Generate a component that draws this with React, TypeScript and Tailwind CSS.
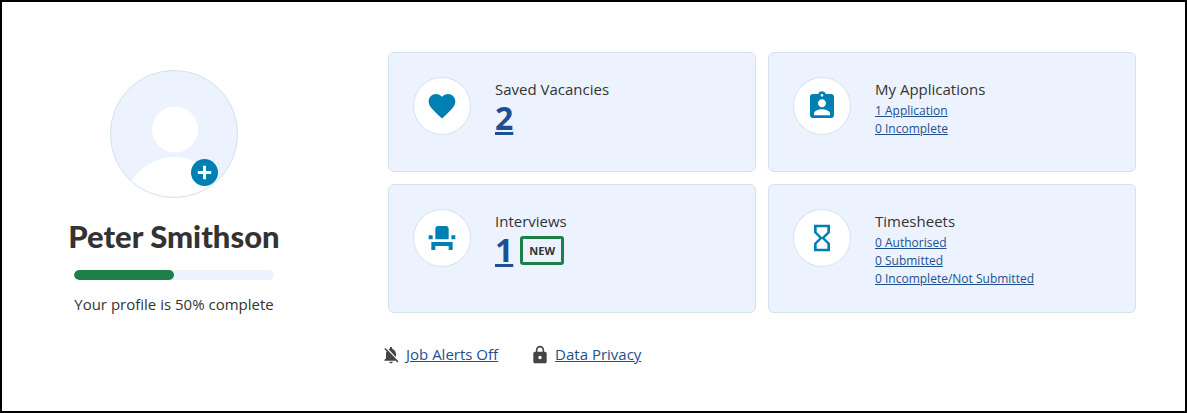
import React from 'react';
import {
  MdAssignmentInd,
  MdEventSeat,
  MdFavorite,
  MdHourglassEmpty,
  MdLock,
  MdNotificationsOff,
} from 'react-icons/md';

const PROFILE_COMPLETE = 50;

const linkClass = 'text-[#1d4f91] underline';

function Avatar() {
  return (
    <div className="relative size-32">
      <svg viewBox="0 0 128 128" className="size-32" aria-hidden="true">
        <defs>
          <clipPath id="avatar-clip">
            <circle cx="64" cy="64" r="63.5" />
          </clipPath>
        </defs>
        <circle cx="64" cy="64" r="64" fill="#ecf3fe" />
        <g clipPath="url(#avatar-clip)" fill="#fff">
          <circle cx="65" cy="59.5" r="23" />
          <circle cx="65" cy="139" r="52" />
        </g>
        <circle cx="64" cy="64" r="63.5" fill="none" stroke="#d3e3ec" />
      </svg>
      <button type="button" aria-label="Upload a photo" className="absolute right-5 bottom-3 size-[27px] rounded-full bg-[#0080b2]">
        <svg viewBox="0 0 27 27" className="size-full" aria-hidden="true">
          <path d="M13.5 6.8v13.4M6.8 13.5h13.4" stroke="#fff" strokeWidth="3" />
        </svg>
      </button>
    </div>
  );
}

interface CardProps {
  title: string;
  icon: React.ReactNode;
  children: React.ReactNode;
}

function Card({ title, icon, children }: CardProps) {
  return (
    <section className="flex min-h-[120px] gap-6 rounded-md border border-[#d3e3ec] bg-[#ecf3fe] p-6">
      <div className="flex size-[58px] shrink-0 items-center justify-center rounded-full border border-[#d3e3ec] bg-white text-[32px] text-[#0080b2]">
        {icon}
      </div>
      <div>
        <h2 className="text-[15px] leading-6">{title}</h2>
        {children}
      </div>
    </section>
  );
}

function CardLinks({ items }: { items: string[] }) {
  return (
    <ul className="pt-px text-xs leading-[18px]">
      {items.map((item) => (
        <li key={item}>
          <a href="#" className={linkClass}>
            {item}
          </a>
        </li>
      ))}
    </ul>
  );
}

function CardCount({ value }: { value: number }) {
  return (
    <a
      href="#"
      className="block text-[32px] leading-[34px] font-bold text-[#1d4f91] underline decoration-[3px] underline-offset-2"
    >
      {value}
    </a>
  );
}

export default function App() {
  return (
    <main className="flex min-h-screen border-2 border-black bg-white font-['Open_Sans','Noto_Sans',sans-serif] text-[#333]">
      <aside className="flex w-86 shrink-0 flex-col items-center pt-17">
        <Avatar />
        <h1 className="mt-[18px] font-['Lato',sans-serif] text-[31px] leading-10 font-black whitespace-nowrap">
          Peter Smithson
        </h1>
        <div
          role="progressbar"
          aria-label="Profile completion"
          aria-valuenow={PROFILE_COMPLETE}
          className="mt-[14px] h-[10px] w-50 overflow-hidden rounded-full bg-[#ecf3fe]"
        >
          <div className="h-full rounded-full bg-[#1c8048]" style={{ width: `${PROFILE_COMPLETE}%` }} />
        </div>
        <p className="mt-3 text-[15px] leading-6">Your profile is {PROFILE_COMPLETE}% complete</p>
      </aside>

      <div className="grow pt-[50px] pr-[49px] pl-[42px]">
        <div className="grid grid-cols-2 gap-3">
          <Card title="Saved Vacancies" icon={<MdFavorite />}>
            <CardCount value={2} />
          </Card>
          <Card title="My Applications" icon={<MdAssignmentInd />}>
            <CardLinks items={['1 Application', '0 Incomplete']} />
          </Card>
          <Card title="Interviews" icon={<MdEventSeat />}>
            <div className="flex items-center gap-[7px]">
              <CardCount value={1} />
              <span className="rounded-[3px] border-3 border-[#1c8048] px-[6px] text-[11px] leading-[23px] font-bold">NEW</span>
            </div>
          </Card>
          <Card title="Timesheets" icon={<MdHourglassEmpty />}>
            <CardLinks items={['0 Authorised', '0 Submitted', '0 Incomplete/Not Submitted']} />
          </Card>
        </div>

        <nav className="mt-[29px] -ml-[7px] flex gap-8 text-[15px] leading-6">
          <a href="#" className={`flex items-center gap-[5px] ${linkClass}`}>
            <MdNotificationsOff className="mt-[2px] size-5 text-[#444]" />
            Job Alerts Off
          </a>
          <a href="#" className={`flex items-center gap-[5px] ${linkClass}`}>
            <MdLock className="mt-[2px] size-5 text-[#444]" />
            Data Privacy
          </a>
        </nav>
      </div>
    </main>
  );
}
